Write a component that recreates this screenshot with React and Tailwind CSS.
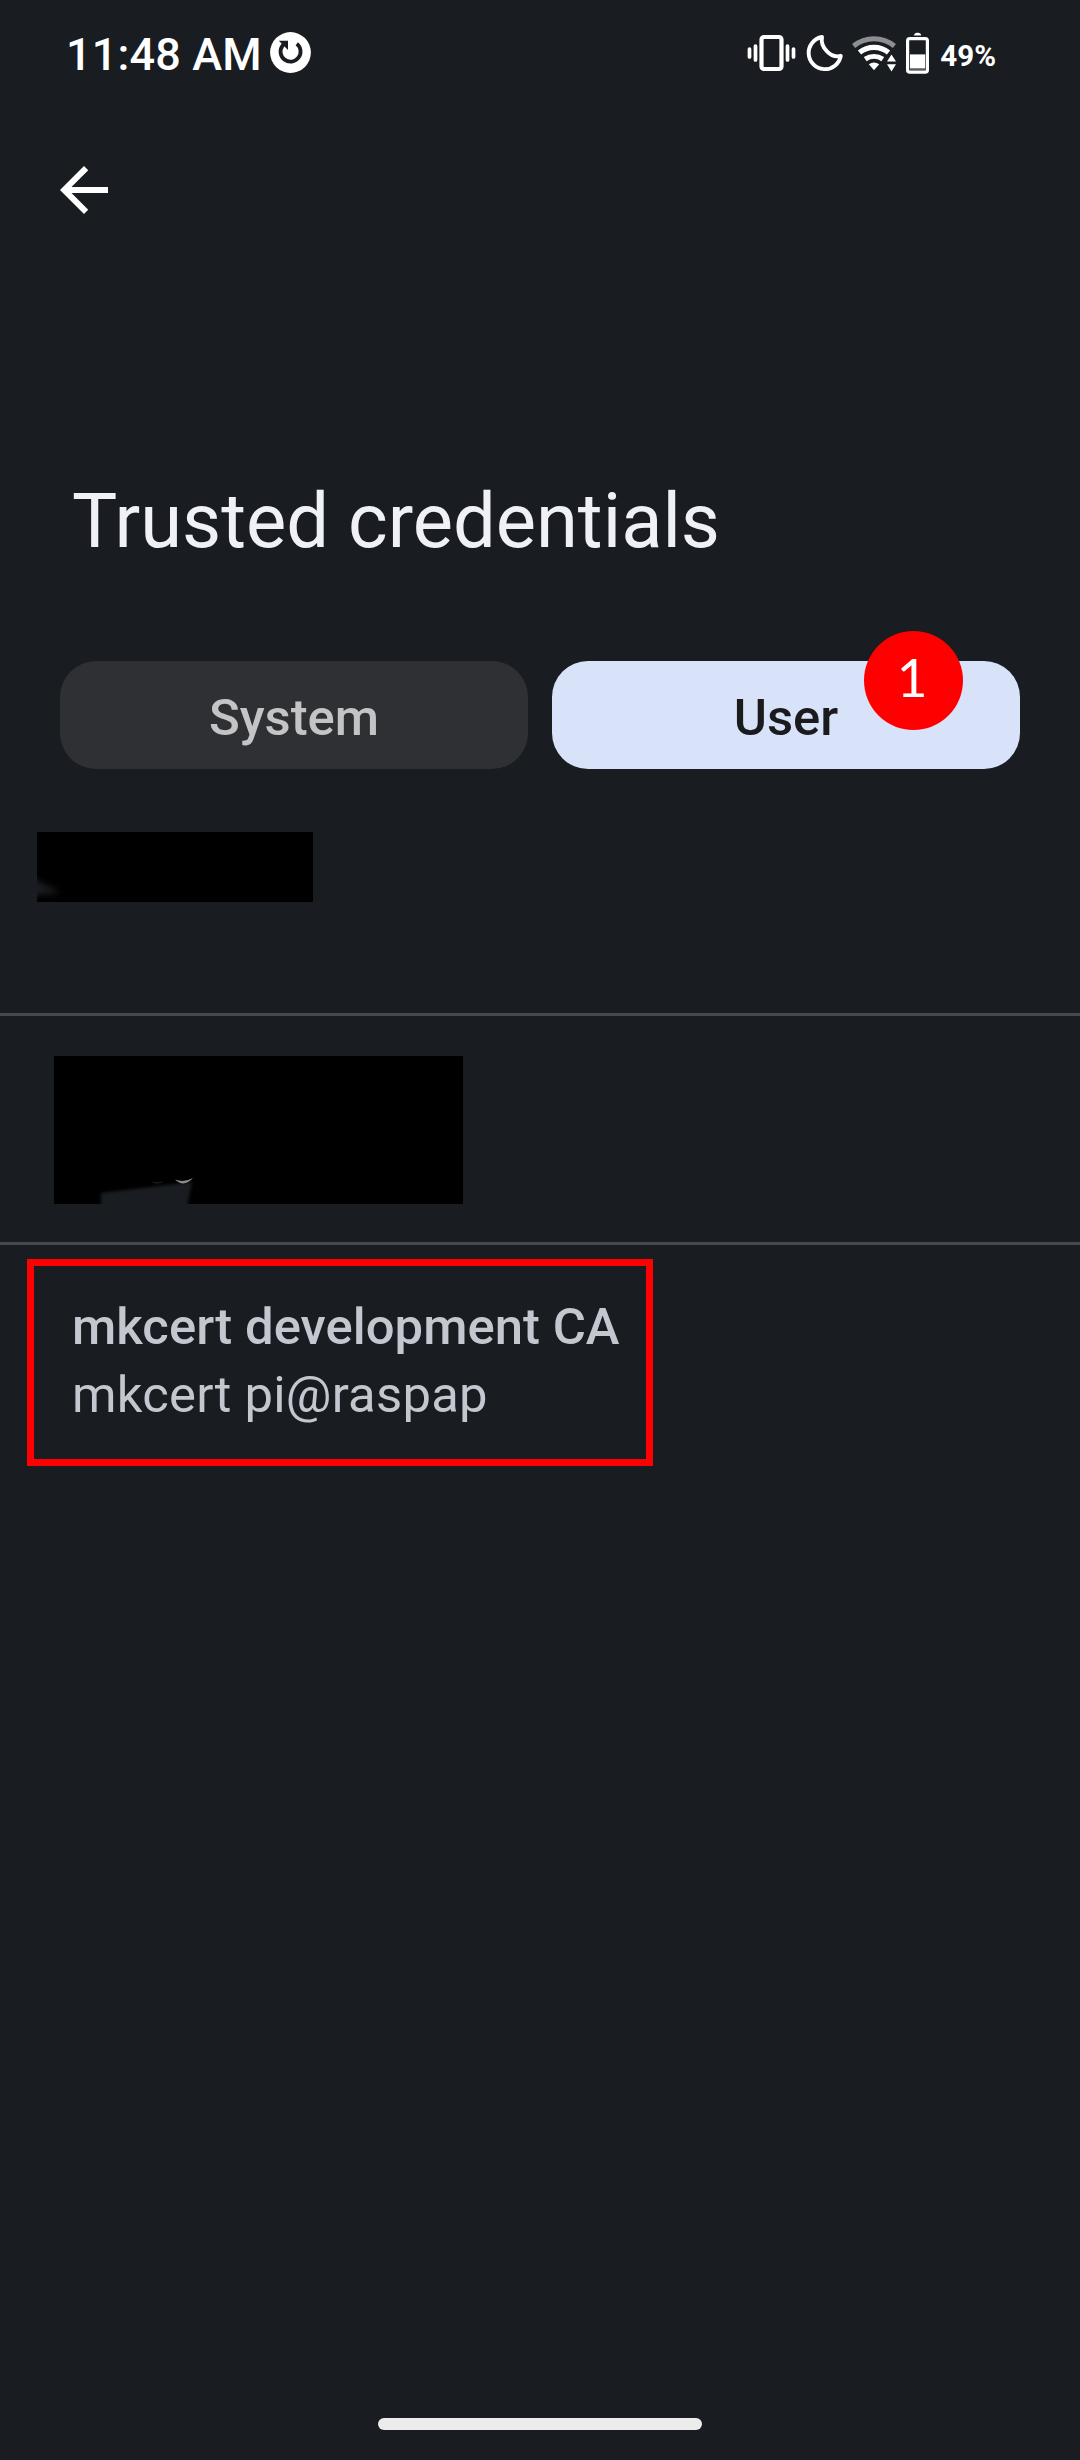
function RotateBadge() {
  return (
    <svg className="mt-[32px] ml-[8px] h-[41px] w-[41px] shrink-0" viewBox="0 0 41 41">
      <circle cx="20.5" cy="20.5" r="20.4" fill="#fff" />
      <path d="M26.8 11.8A10 10 0 1 1 12.4 13.8L15 11" fill="none" stroke="#191c20" strokeWidth="3.8" />
      <path d="M8.8 8.8H18V18Z" fill="#191c20" />
    </svg>
  );
}

function VibrateIcon() {
  return (
    <svg className="mt-[34px] h-[38px] w-[49px]" viewBox="0 0 49 38" fill="none" stroke="#fff">
      <rect x="14.5" y="3" width="20" height="32" rx="2.5" strokeWidth="4.2" />
      <g strokeWidth="3.7" strokeLinecap="round">
        <path d="M2.5 15v8M8.5 12v14M40.5 12v14M46.5 15v8" />
      </g>
    </svg>
  );
}

function MoonIcon() {
  return (
    <svg className="mt-[34px] ml-[9px] h-[38px] w-[39px]" viewBox="0 0 39 38">
      <path
        d="M17 3A16.2 16.2 0 1 0 35.8 21.8C26 24.8 15 13.5 17 3Z"
        fill="none"
        stroke="#fff"
        strokeWidth="3.9"
        strokeLinejoin="round"
      />
    </svg>
  );
}

function WifiIcon() {
  return (
    <svg className="mt-[34px] ml-[8px] h-[38px] w-[46px]" viewBox="0 0 46 38" fill="none">
      <path d="M1.6 12A32.4 32.4 0 0 1 42.4 12" stroke="#8d8e90" strokeWidth="5" />
      <path d="M7.5 18.6A22.8 22.8 0 0 1 36.5 18.6" stroke="#fff" strokeWidth="5.2" />
      <path d="M13.2 25.2A15.9 15.9 0 0 1 30.8 25.2" stroke="#fff" strokeWidth="5" />
      <path d="M16.8 30.2Q22 27 27.2 30.2L22 36.2Z" fill="#fff" />
      <path d="M39.5 20.5L44 27.6H35ZM35 30.2H44L39.5 37.5Z" fill="#fff" />
    </svg>
  );
}

function BatteryIcon() {
  return (
    <svg className="mt-[32px] ml-[8px] h-[42px] w-[24px]" viewBox="0 0 24 42">
      <path d="M7.8 3.4Q8.4 .7 10.6 .7H12.4Q14.8 .7 15.4 3.4Z" fill="#fff" />
      <rect x="1.6" y="6.6" width="19.8" height="33.5" rx="2.2" fill="none" stroke="#fff" strokeWidth="3.2" />
      <rect x="4" y="22.4" width="15.2" height="14" fill="#fff" />
      <rect x="4" y="36.4" width="15.2" height="1.2" fill="#8d8e90" />
    </svg>
  );
}

function StatusBar() {
  return (
    <header className="flex h-[105px] shrink-0 items-start justify-between pr-[84px] pl-[66px] text-white">
      <div className="flex items-start">
        <span className="mt-[29px] text-[45px] leading-[52px] font-medium tracking-[0.15px] whitespace-nowrap">11:48 AM</span>
        <RotateBadge />
      </div>
      <div className="flex items-start">
        <VibrateIcon />
        <MoonIcon />
        <WifiIcon />
        <BatteryIcon />
        <span className="mt-[38px] ml-[10px] text-[29.5px] leading-[36px] font-bold">49%</span>
      </div>
    </header>
  );
}

function Tabs() {
  return (
    <div className="mt-[97px] flex h-[108px] shrink-0 gap-6 px-[60px] text-[50.8px] leading-[60px] font-medium">
      <button className="flex flex-1 items-center justify-center rounded-[36px] bg-[#2f3034] pt-[5px] text-[#c4c4c6]">
        System
      </button>
      <button className="relative flex flex-1 items-center justify-center rounded-[36px] bg-[#d8e3fa] pt-[5px] text-[#1b1b1e]">
        User
        <span className="absolute -top-[30px] right-[57px] flex size-[99px] items-center justify-center rounded-full bg-[#ff0000] pr-[3px] pb-[7px] font-[Lato,sans-serif] text-[53px] font-normal text-white">
          1
        </span>
      </button>
    </div>
  );
}

function FirstRedaction() {
  return (
    <svg className="ml-[37px] h-[70px] w-[276px]" viewBox="0 0 276 70">
      <defs>
        <filter id="soft-a" x="-50%" y="-50%" width="200%" height="200%" colorInterpolationFilters="sRGB">
          <feGaussianBlur stdDeviation="3" />
        </filter>
      </defs>
      <rect width="276" height="70" fill="#000" />
      <path d="M-8 44L24 61L-8 64Z" fill="#191c20" filter="url(#soft-a)" />
    </svg>
  );
}

function SecondRedaction() {
  return (
    <svg className="ml-[54px] h-[148px] w-[409px]" viewBox="0 0 409 148">
      <defs>
        <filter id="soft-b" x="-20%" y="-50%" width="140%" height="200%" colorInterpolationFilters="sRGB">
          <feGaussianBlur stdDeviation="1.8" />
        </filter>
        <filter id="soft-c" x="-20%" y="-50%" width="140%" height="200%" colorInterpolationFilters="sRGB">
          <feGaussianBlur stdDeviation="0.6" />
        </filter>
      </defs>
      <rect width="409" height="148" fill="#000" />
      <path d="M47 137L138 126L132 156H47Z" fill="#191c20" filter="url(#soft-b)" />
      <path d="M97 125Q103 130 110 125Q103 127.500 97 125Z" fill="#202226" />
      <path d="M121 123.500Q130 132 139 122Q130 127 121 123.500Z" fill="#8a8b8e" filter="url(#soft-c)" />
    </svg>
  );
}

export default function App() {
  return (
    <main className="flex h-[2460px] w-[1080px] flex-col overflow-hidden bg-[#191c20] font-[Roboto,sans-serif]">
      <StatusBar />
      <nav className="h-[135px] shrink-0 pt-[49px] pl-[48px]">
        <svg className="size-[72px]" viewBox="0 0 24 24" fill="#fff">
          <path d="M20 11H7.83l5.59-5.59L12 4l-8 8 8 8 1.41-1.41L7.83 13H20v-2z" />
        </svg>
      </nav>
      <h1 className="mt-[237px] h-[87px] shrink-0 pl-[72px] text-[75.9px] leading-[90px] whitespace-nowrap text-[#f0f0f7]">
        Trusted credentials
      </h1>
      <Tabs />
      <section className="flex h-[247px] shrink-0 flex-col border-b-3 border-[#46494e] pt-[63px]">
        <FirstRedaction />
      </section>
      <section className="flex h-[229px] shrink-0 flex-col border-b-3 border-[#46494e] pt-[40px]">
        <SecondRedaction />
      </section>
      <section className="mt-[14px] ml-[27px] flex h-[207px] w-[626px] shrink-0 flex-col border-7 border-[#ff0000] pt-[27px] pl-[38px] text-[50.8px] leading-[68px] whitespace-nowrap text-[#c4c6d0]">
        <p className="font-medium tracking-[0.04px]">mkcert development CA</p>
        <p className="tracking-[0.22px]">mkcert pi@raspap</p>
      </section>
      <div className="mx-auto mt-auto mb-[30px] h-[12px] w-[324px] shrink-0 rounded-full bg-[#ececec]" />
    </main>
  );
}
